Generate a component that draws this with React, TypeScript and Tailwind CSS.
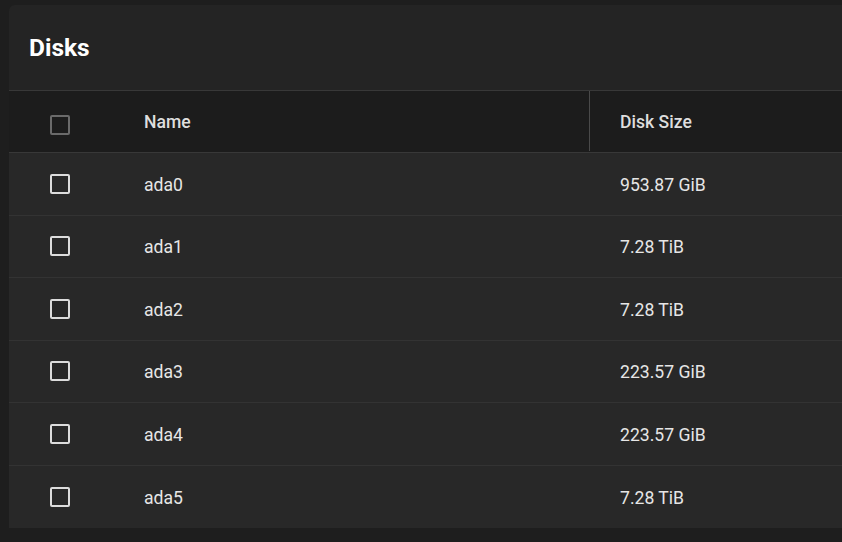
import React from 'react';

const disks = [
  { name: 'ada0', size: '953.87 GiB' },
  { name: 'ada1', size: '7.28 TiB' },
  { name: 'ada2', size: '7.28 TiB' },
  { name: 'ada3', size: '223.57 GiB' },
  { name: 'ada4', size: '223.57 GiB' },
  { name: 'ada5', size: '7.28 TiB' },
];

const Checkbox: React.FC<{ muted?: boolean }> = ({ muted }) => (
  <div
    className={`w-[20px] h-[20px] rounded-[2px] border-2 ${muted ? 'border-[#6a6a6a]' : 'border-[#dcdcdc]'}`}
  />
);

const App: React.FC = () => {
  return (
    <div
      className="w-full h-[542px] bg-[#1e1e1e] pt-[5px] pl-[9px] overflow-hidden"
      style={{ fontFamily: 'Roboto, "Noto Sans", sans-serif' }}
    >
      <div className="w-[860px] bg-[#242424] rounded-tl-[6px]">
        {/* Title */}
        <div className="h-[86px] px-5 flex items-center border-b border-[#383838]">
          <h1 className="text-[24.5px] font-bold text-white pt-[1px]">Disks</h1>
        </div>

        {/* Table header */}
        <div className="grid grid-cols-[135px_445px_1fr] h-[62px] bg-[#1c1c1c] border-b border-[#383838] text-[17.6px] font-medium text-[#dedede]">
          <div className="flex items-center pl-[41px] pt-[6px]">
            <Checkbox muted />
          </div>
          <div className="flex items-center pt-[2px]">Name</div>
          <div className="flex items-center pl-[30px] pt-[2px] border-l border-[#4a4a4a] mb-[1px]">Disk Size</div>
        </div>

        {/* Rows */}
        {disks.map((d, i) => (
          <div
            key={d.name}
            className={`grid grid-cols-[135px_445px_1fr] h-[62.5px] bg-[#282828] text-[17.6px] text-[#e6e6e6] ${i < disks.length - 1 ? 'border-b border-[#333333]' : ''}`}
          >
            <div className="flex items-center pl-[41px]">
              <Checkbox />
            </div>
            <div className="flex items-center pt-[2px]">{d.name}</div>
            <div className="flex items-center pl-[31px] pt-[2px]">{d.size}</div>
          </div>
        ))}
      </div>
    </div>
  );
};

export default App;
